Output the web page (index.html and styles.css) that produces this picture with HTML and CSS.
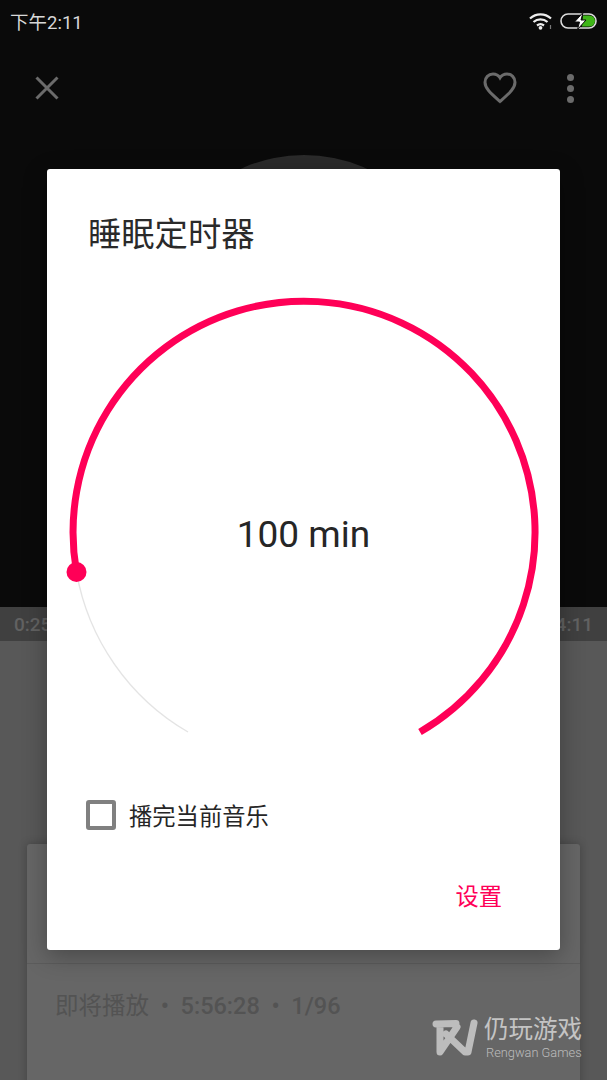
FILE: index.html
```html
<!DOCTYPE html>
<html lang="en">
<head>
  <meta charset="UTF-8">
  <title>睡眠定时器</title>
  <link rel="stylesheet" href="styles.css">
</head>

<body>
  <div class="screen">
    <div class="player-top">
      <div class="status-bar">
        <span class="clock">下午2:11</span>
        <div class="status-icons">
          <svg class="wifi" viewBox="0 0 24 18" width="24" height="18">
            <path d="M1 6.500C7 1 16 1 22 6.500M4.500 10C8.500 6.500 14.500 6.500 18.500 10M8 13.500C10 12 13 12 15 13.500" fill="none" stroke="#eee" stroke-width="2.200"/>
            <circle cx="11.500" cy="15.800" r="1.900" fill="#eee"/>
            <path d="M21.500 13v4" stroke="#777" stroke-width="1.200"/>
          </svg>
          <svg class="battery" viewBox="0 0 38 18" width="38" height="18">
            <rect x="1" y="2" width="35" height="14" rx="7" fill="none" stroke="#ddd" stroke-width="1.600"/>
            <path d="M23 3.500h6.500a5.500 5.500 0 0 1 0 11H22z" fill="#3fb618"/>
            <path d="M23 0.500L14.500 10h5l-2 7.500L26 8h-5z" fill="#fff" stroke="#0a0a0a" stroke-width="1"/>
          </svg>
        </div>
      </div>
      <div class="toolbar">
        <svg viewBox="0 0 24 24" width="24" height="24">
          <path d="M1.500 1.500L22.500 22.500M22.500 1.500L1.500 22.500" stroke="#6b6b6b" stroke-width="3" fill="none"/>
        </svg>
        <div class="toolbar-right">
          <svg viewBox="0 0 34 32" width="34" height="32">
            <path d="M17 29.500C8 21.500 2 16.500 2 10.200C2 5.500 5.500 2 10 2C12.800 2 15.500 3.400 17 5.800C18.500 3.400 21.200 2 24 2C28.500 2 32 5.500 32 10.200C32 16.500 26 21.500 17 29.500Z" fill="none" stroke="#6b6b6b" stroke-width="3"/>
          </svg>
          <div class="more-dots">
            <span></span><span></span><span></span>
          </div>
        </div>
      </div>
      <div class="art-wrap">
        <div class="album-art"></div>
      </div>
    </div>

    <div class="progress-strip">
      <span>0:25</span>
      <span>4:11</span>
    </div>

    <div class="player-bottom">
      <div class="queue-card">
        <div class="queue-now"></div>
        <div class="queue-next"><span class="queue-label">即将播放</span> &nbsp;•&nbsp; 5:56:28 &nbsp;•&nbsp; 1/96</div>
      </div>
    </div>

    <div class="modal">
      <h2 class="modal-title">睡眠定时器</h2>
      <div class="dial">
        <svg viewBox="0 0 513 465" width="513" height="465">
          <path d="M141 447A231 231 0 0 1 29.500 287" fill="none" stroke="#e4e4e4" stroke-width="1.400"/>
          <path d="M373 447A231 231 0 1 0 29.500 287" fill="none" stroke="#ff0057" stroke-width="7"/>
          <circle cx="29.500" cy="287" r="10" fill="#ff0057"/>
        </svg>
        <div class="dial-value">100 min</div>
      </div>
      <div class="check-row">
        <span class="checkbox"></span>
        <span>播完当前音乐</span>
      </div>
      <div class="modal-actions">
        <span class="action-btn">设置</span>
      </div>
    </div>

    <div class="watermark">
      <svg class="wm-logo" viewBox="0 0 46 38" width="46" height="38">
        <path d="M4 5L24 4.500M8 9V33L25 8M14 15L33 33H36L42 4" fill="none" stroke="#bdbdbd" stroke-width="7" stroke-linecap="round" stroke-linejoin="round"/>
      </svg>
      <div class="watermark-text">
        <div class="wm-cn">仍玩游戏</div>
        <div class="wm-en">Rengwan Games</div>
      </div>
    </div>
  </div>
</body>
</html>
```

FILE: styles.css
```css
* {
  box-sizing: border-box;
}
body {
  margin: 0;
  font-family: Roboto, "Noto Sans CJK SC", sans-serif;
  background: #0a0a0a;
}
.screen {
  position: relative;
  width: 607px;
  height: 1080px;
  overflow: hidden;
  display: flex;
  flex-direction: column;
}

.player-top {
  flex: none;
  height: 607px;
  overflow: hidden;
  background: #0a0a0a;
  display: flex;
  flex-direction: column;
}
.status-bar {
  height: 42px;
  padding: 0 9px 0 10px;
  display: flex;
  justify-content: space-between;
  align-items: center;
}
.clock {
  color: #d8d8d8;
  font-size: 18.500px;
}
.status-icons {
  display: flex;
  align-items: center;
  gap: 7px;
}
.toolbar {
  height: 70px;
  padding: 22px 33px 0 35px;
  display: flex;
  justify-content: space-between;
  align-items: center;
}
.toolbar-right {
  display: flex;
  align-items: center;
  gap: 50px;
}
.more-dots {
  display: flex;
  flex-direction: column;
  gap: 4px;
}
.more-dots span {
  width: 7px;
  height: 7px;
  border-radius: 50%;
  background: #6b6b6b;
}
.art-wrap {
  display: flex;
  justify-content: center;
  padding-top: 43px;
}
.album-art {
  flex: none;
  width: 306px;
  height: 306px;
  border-radius: 50%;
  background: #2b2b2b;
}

.progress-strip {
  flex: none;
  height: 34px;
  padding: 0 14px;
  background: #404040;
  color: #626262;
  font-size: 19px;
  font-weight: 500;
  display: flex;
  justify-content: space-between;
  align-items: center;
}
.player-bottom {
  flex: 1;
  min-height: 0;
  overflow: hidden;
  padding: 203px 27px 0;
  background: #585858;
}
.queue-card {
  height: 300px;
  background: #666;
  border-radius: 3px;
  box-shadow: 0 0 8px rgba(0, 0, 0, 0.25);
}
.queue-now {
  height: 120px;
  border-bottom: 1px solid #5c5c5c;
}
.queue-next {
  padding: 23px 0 0 28px;
  color: #535353;
  font-size: 23.500px;
  font-weight: 500;
}
.queue-label {
  font-weight: 400;
}

.modal {
  position: absolute;
  left: 47px;
  top: 169px;
  width: 513px;
  height: 781px;
  background: #fff;
  border-radius: 3px;
  box-shadow: 0 6px 24px rgba(0, 0, 0, 0.3);
  display: flex;
  flex-direction: column;
}
.modal-title {
  margin: 0;
  height: 116px;
  padding: 45px 0 0 41px;
  color: #2a2a2a;
  font-size: 33.300px;
  line-height: 42px;
  font-weight: 400;
}
.dial {
  position: relative;
  flex: none;
  height: 465px;
}
.dial svg {
  display: block;
}
.dial-value {
  position: absolute;
  left: 0;
  right: 0;
  top: 226px;
  text-align: center;
  color: #262626;
  font-size: 37px;
  line-height: 48px;
}
.check-row {
  margin-top: 48px;
  padding-left: 39px;
  display: flex;
  align-items: center;
  gap: 13px;
  color: #262626;
  font-size: 23.300px;
}
.checkbox {
  width: 30px;
  height: 30px;
  border: 4px solid #808080;
  border-radius: 3px;
}
.modal-actions {
  margin-top: 46px;
  padding-right: 58px;
  display: flex;
  justify-content: flex-end;
}
.action-btn {
  color: #ff0057;
  font-size: 23.300px;
}

.watermark {
  position: absolute;
  left: 432px;
  top: 1017px;
  display: flex;
  gap: 6px;
}
.wm-logo {
  margin-top: 2px;
}
.watermark-text {
  width: 100px;
}
.wm-cn {
  color: #c4c4c4;
  font-size: 24.500px;
  line-height: 26px;
}
.wm-en {
  margin: 2px 0 0 2px;
  color: #bdbdbd;
  font-size: 12.800px;
  font-weight: 300;
  white-space: nowrap;
}
```
